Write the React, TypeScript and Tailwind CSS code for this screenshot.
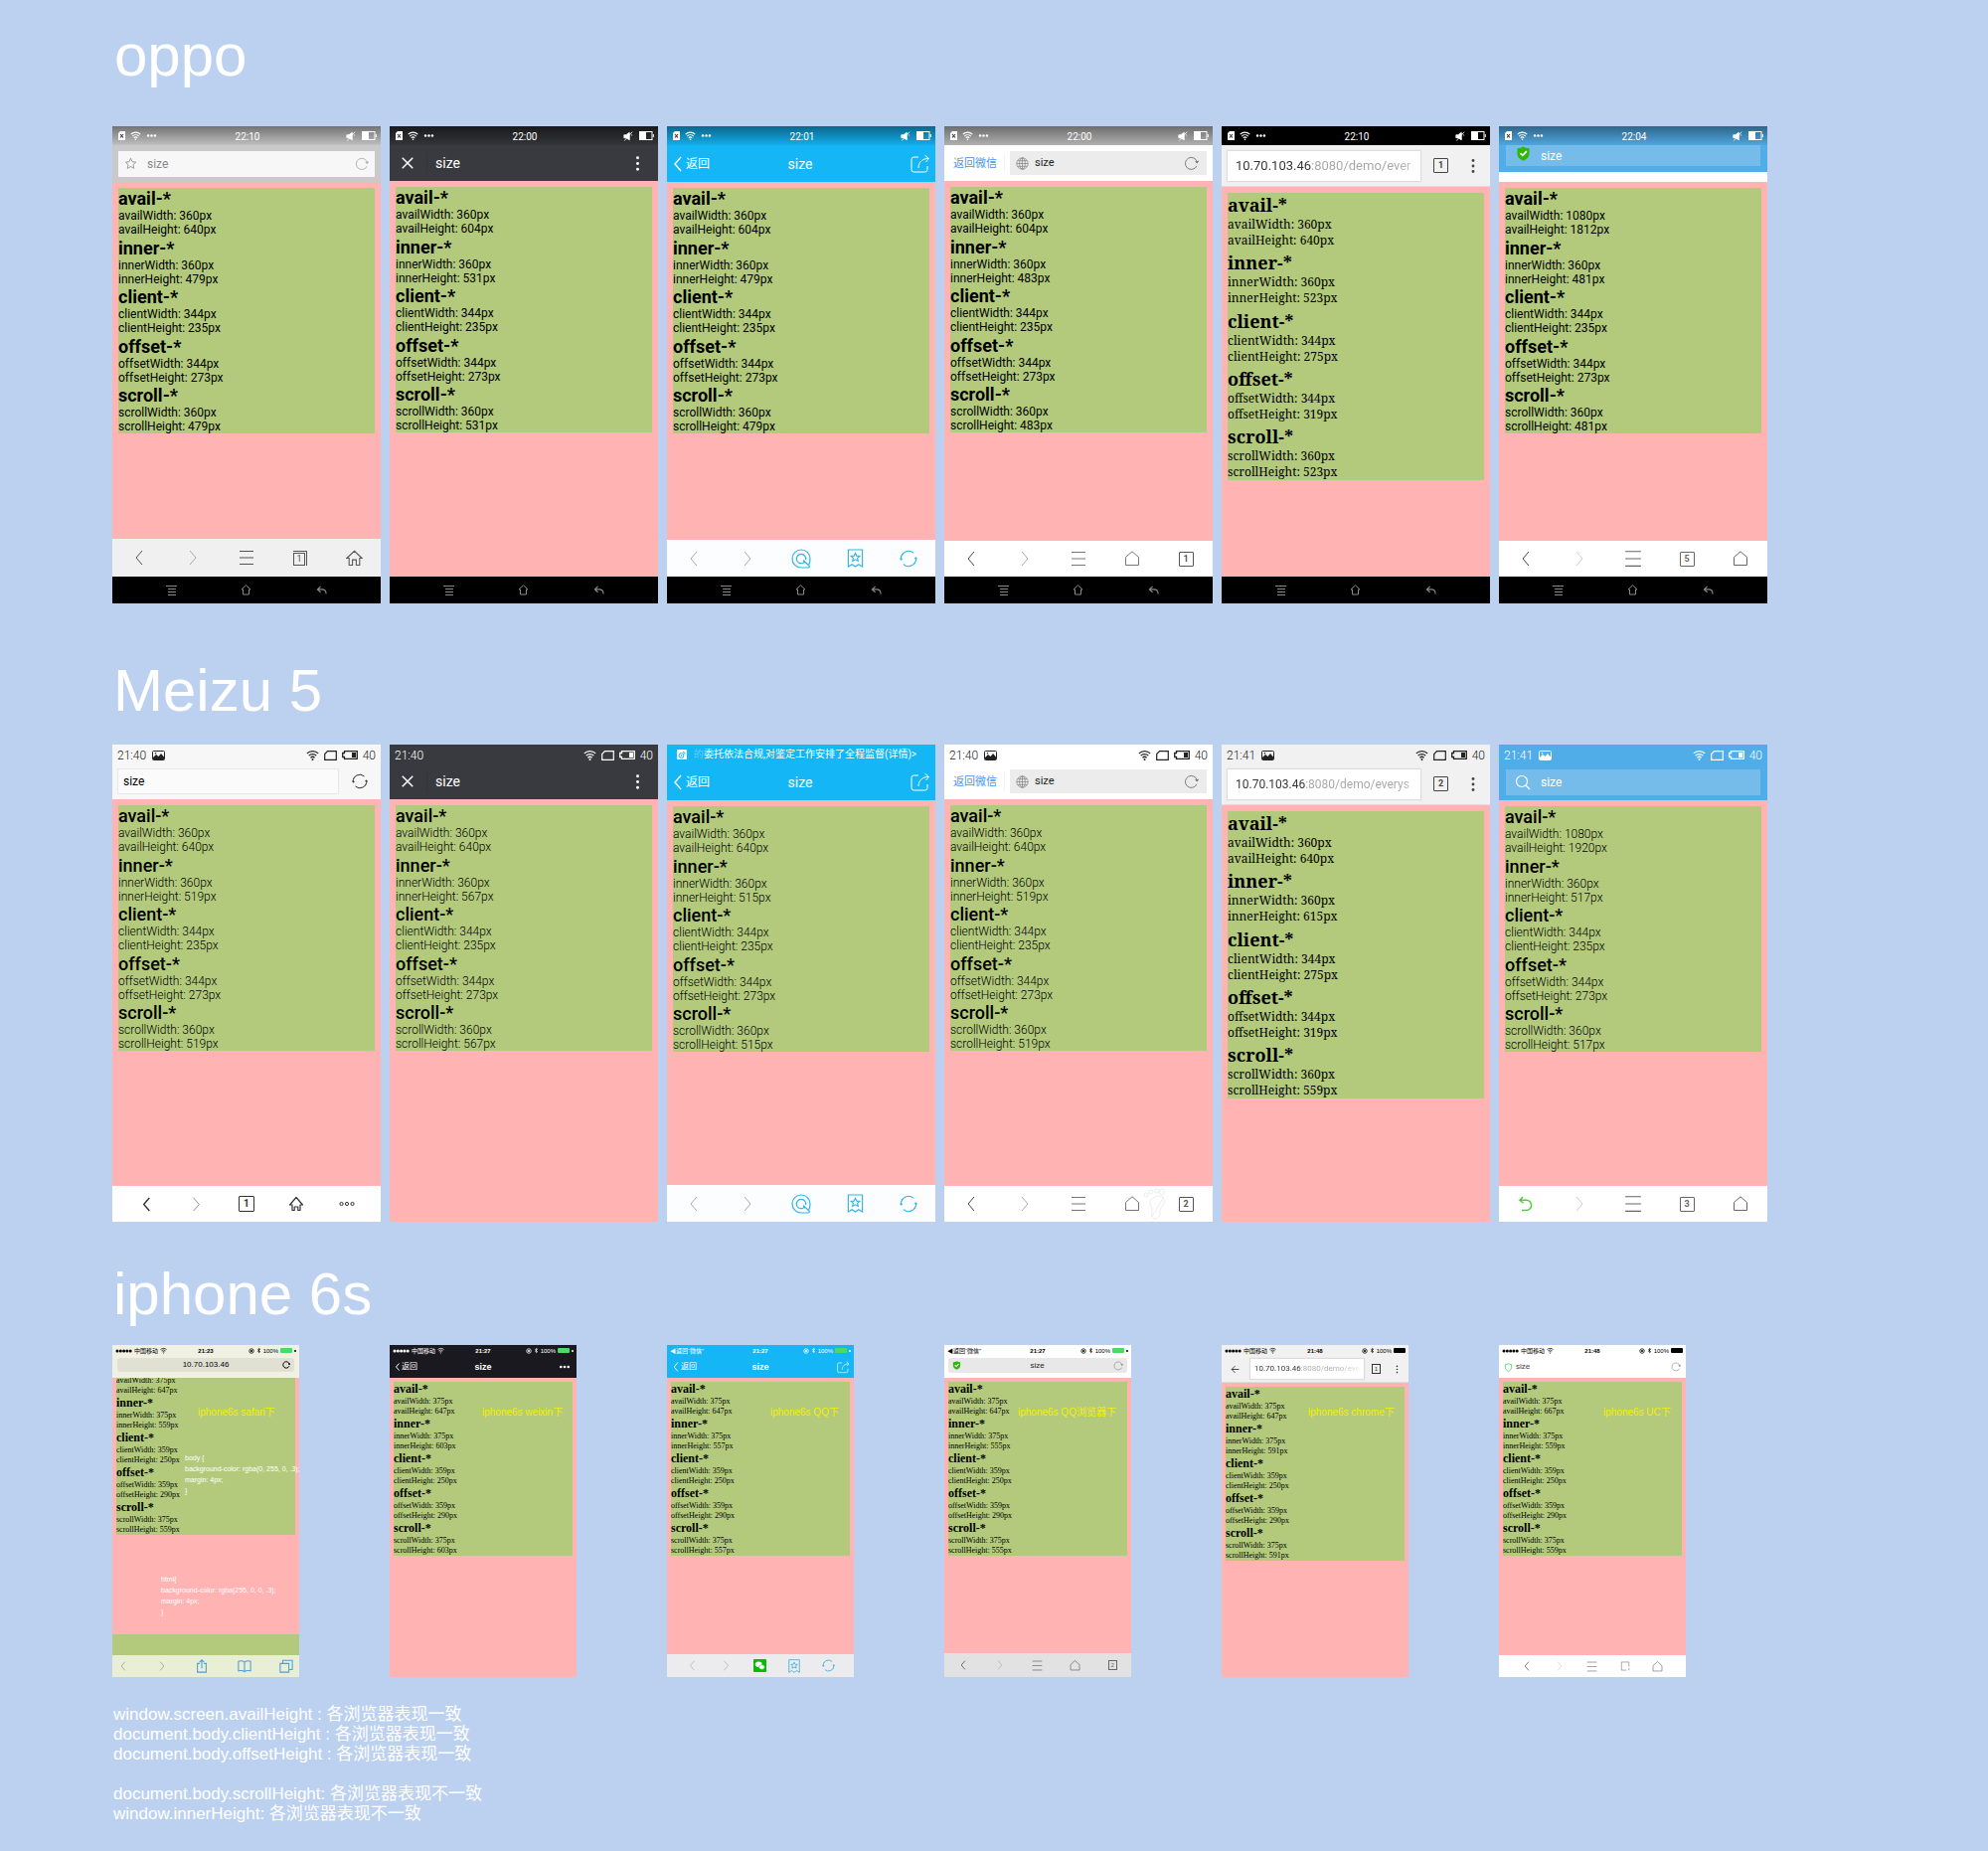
import React from "react";
import type { ReactNode } from "react";

type Kind = "roboto" | "light" | "serif" | "times";

const SANS = "font-['Liberation_Sans','Noto_Sans_CJK_SC',sans-serif]";
const ROBOTO = "font-['Roboto','Noto_Sans_CJK_SC',sans-serif]";

const styles: Record<Kind, { panel: string; title: string; line: string }> = {
  roboto: {
    panel: "h-[247px] font-['Roboto',sans-serif]",
    title: "text-[18px] leading-[21px] font-bold",
    line: "text-[12px] leading-[14px]",
  },
  light: {
    panel: "h-[247px] font-['Roboto',sans-serif]",
    title: "text-[18px] leading-[21px] font-medium",
    line: "text-[12px] leading-[14px] font-light",
  },
  serif: {
    panel: "h-[289px] font-['Noto_Serif','DejaVu_Serif_Condensed','DejaVu_Serif',serif]",
    title: "text-[18px] leading-[24px] font-bold",
    line: "text-[12px] leading-[16px]",
  },
  times: {
    panel: "h-[175px] font-['Liberation_Serif',serif]",
    title: "text-[12px] leading-[15px] font-bold",
    line: "text-[8px] leading-[10px]",
  },
};

/* ---------- icons ---------- */

type IconProps = { className?: string };

function Svg({ className = "size-4", box = 16, w = 1, children }: IconProps & { box?: number; w?: number; children: ReactNode }) {
  return (
    <svg className={className + " shrink-0"} viewBox={`0 0 ${box} ${box}`} fill="none" stroke="currentColor" strokeWidth={w} aria-hidden="true">
      {children}
    </svg>
  );
}

const Left = ({ className }: IconProps) => <Svg className={className}><path d="M11 1 5 8l6 7" /></Svg>;
const Right = ({ className }: IconProps) => <Svg className={className}><path d="m5 1 6 7-6 7" /></Svg>;
const Menu = ({ className }: IconProps) => <Svg className={className}><path d="M1 1.500h14M1 8h14M1 14.500h14" /></Svg>;
const House = ({ className }: IconProps) => <Svg className={className}><path d="M1.500 6.500 8 .8l6.500 5.700v8h-13z" /></Svg>;
const HouseDoor = ({ className }: IconProps) => (
  <Svg className={className}><path d="M.8 8 8 1.200 15.200 8H13v6.500H9.800v-5H6.200v5H3V8z" /></Svg>
);
const ArrowHouse = ({ className }: IconProps) => (
  <Svg className={className} w={1.2}><path d="M1.500 9 8 1.500 14.500 9H12v5.500H9.800V11H6.200v3.500H4V9z" strokeLinejoin="round" /></Svg>
);
const Share = ({ className }: IconProps) => (
  <Svg className={className} box={20}>
    <path d="M8 3H3.500A2.500 2.500 0 0 0 1 5.500v10A2.500 2.500 0 0 0 3.500 18h11a2.500 2.500 0 0 0 2.500-2.500V12" />
    <path d="M8 14c0-6 4-9.500 10-9.500M14.500 1.200 18.500 4.500 15.500 8" />
  </Svg>
);
const Reload = ({ className }: IconProps) => (
  <Svg className={className}><path d="M13.800 10.500A6.400 6.400 0 1 1 14.200 6.500" /><path d="m15.600 5-1.300 2.500-2-1.600" fill="currentColor" /></Svg>
);
const Sync = ({ className }: IconProps) => (
  <Svg className={className}>
    <path d="M1.300 8.500A6.700 6.700 0 0 1 12.500 3M14.700 7.500A6.700 6.700 0 0 1 3.500 13" />
    <path d="M.4 7.800 1.400 9.300 2.700 8.200zM15.600 8.200 14.600 6.700 13.300 7.800z" fill="currentColor" strokeWidth=".5" />
    <path d="M1.800 5.500 3.200 3.500M14.200 10.500l-1.400 2" strokeWidth=".6" />
  </Svg>
);
const Search = ({ className }: IconProps) => <Svg className={className} w={1.2}><circle cx="7" cy="7" r="5.500" /><path d="m11 11 4 4" /></Svg>;
const QSearch = ({ className }: IconProps) => (
  <Svg className={className} box={20} w={1.2}>
    <path d="M17.500 16.500c1.200.8 1 2.500-.5 2.500h-7a9 9 0 1 1 9-9c0 2.600-.6 4.800-1.500 6.500z" />
    <path d="M17 16.200 12.500 12c-.2 1.200.1 2 .8 2.600M12 14.300a4.700 4.700 0 1 1 2.600-3.200" />
  </Svg>
);
const Bookmark = ({ className }: IconProps) => (
  <Svg className={className} box={20} w={1.2}>
    <path d="M2.500 1h15v18l-4-2.500L10 19l-3.500-2.500-4 2.500z" />
    <path d="m10 4.500 1.400 3 3.200.3-2.400 2.100.8 3.200-3-1.700-3 1.700.8-3.200-2.400-2.100 3.200-.3z" />
  </Svg>
);
const Star = ({ className }: IconProps) => (
  <Svg className={className}><path d="m8 1.500 1.900 4.300 4.600.5-3.400 3.100.9 4.600L8 11.700 4 14l.9-4.600L1.500 6.300l4.600-.5z" /></Svg>
);
const Cross = ({ className }: IconProps) => <Svg className={className} w={1.7}><path d="m2 2 12 12M14 2 2 14" /></Svg>;
const Globe = ({ className }: IconProps) => (
  <Svg className={className} w={0.8}><circle cx="8" cy="8" r="7" /><ellipse cx="8" cy="8" rx="3.500" ry="7" /><path d="M8 1v14M1 8h14M2.200 4.500h11.600M2.200 11.500h11.600" /></Svg>
);
const DotsV = ({ className }: IconProps) => (
  <Svg className={className}><g fill="currentColor" stroke="none"><circle cx="8" cy="2.500" r="1.400" /><circle cx="8" cy="8" r="1.400" /><circle cx="8" cy="13.500" r="1.400" /></g></Svg>
);
const DotsH = ({ className }: IconProps) => (
  <Svg className={className}><g fill="currentColor" stroke="none"><circle cx="3" cy="8" r="1.800" /><circle cx="8" cy="8" r="1.800" /><circle cx="13" cy="8" r="1.800" /></g></Svg>
);
const RingsH = ({ className }: IconProps) => (
  <Svg className={className}><circle cx="2.500" cy="8" r="1.600" /><circle cx="8" cy="8" r="1.600" /><circle cx="13.500" cy="8" r="1.600" /></Svg>
);
const Shield = ({ className, outline = false }: IconProps & { outline?: boolean }) => (
  <Svg className={className} w={outline ? 1.5 : 1}>
    {outline ? (
      <path d="M8 1.500 13.500 3v5c0 3.500-2.500 5.500-5.500 7-3-1.500-5.500-3.500-5.500-7V3z" />
    ) : (
      <>
        <path d="M8 .5c2 1.300 4 1.800 6.500 1.800V8c0 4-3 6.200-6.500 7.700C4.500 14.200 1.500 12 1.500 8V2.300C4 2.300 6 1.800 8 .5z" fill="#2fb80c" stroke="none" />
        <path d="m4.800 7.500 2.500 2.500 4.300-4.500" stroke="#fff" strokeWidth="1.800" />
      </>
    )}
  </Svg>
);
const Undo = ({ className }: IconProps) => (
  <Svg className={className} w={1.5}><path d="M5 1 2 4.300l3.500 3M2.500 4.300H8.500a5 5 0 0 1 0 10.200H4" /></Svg>
);
const Wifi = ({ className }: IconProps) => (
  <Svg className={className} w={1.6}><path d="M1 6a10 10 0 0 1 14 0M3.300 8.800a6.700 6.700 0 0 1 9.400 0M5.500 11.300a3.600 3.600 0 0 1 5 0" /><circle cx="8" cy="13.500" r="1.200" fill="currentColor" stroke="none" /></Svg>
);
const SimX = () => (
  <svg className="h-[9px] w-[7px] shrink-0" viewBox="0 0 7 9" aria-hidden="true">
    <path d="M2 0h5v9H0V2z" fill="#fff" />
    <path d="m2 3 3 3.500M5 3 2 6.500" stroke="#333" strokeWidth="1.100" />
  </svg>
);
const Mute = () => (
  <Svg className="size-[10px]" box={12}><path d="M1 4.500h2.500L7.500 1.500v9L3.500 8H1z" fill="currentColor" /><path d="M1.500 11.500 11 .8M9.500 4.500l1.500.5" /></Svg>
);
const Battery = () => (
  <svg className="h-[9px] w-[15px] shrink-0" viewBox="0 0 15 9" fill="none" stroke="currentColor" aria-hidden="true">
    <rect x=".5" y=".5" width="12.500" height="8" /><rect x="1" y="1" width="6" height="7" fill="currentColor" stroke="none" /><path d="M14.300 3v3" />
  </svg>
);
const Picture = () => (
  <svg className="h-[10px] w-[13px] shrink-0" viewBox="0 0 13 10" fill="none" stroke="currentColor" aria-hidden="true">
    <rect x=".5" y=".5" width="12" height="9" rx="1" /><path d="M1 9V7l3-3 2.500 2 2.500-3 3 3.500V9z" fill="currentColor" stroke="none" /><circle cx="3.500" cy="2.800" r=".8" fill="currentColor" stroke="none" />
  </svg>
);
const SimOutline = () => (
  <svg className="h-[10px] w-[13px] shrink-0" viewBox="0 0 13 10" fill="none" stroke="currentColor" aria-hidden="true">
    <path d="M3.500.7h8.800v8.600H.7V3.500z" strokeWidth="1.200" />
  </svg>
);
const MzBattery = () => (
  <svg className="h-[9px] w-4 shrink-0" viewBox="0 0 16 9" fill="none" stroke="currentColor" aria-hidden="true">
    <path d="M2.500.7h12.800v7.600H2.500V6.500H.7v-4h1.800z" strokeWidth="1.300" /><path d="M10 2h4v5h-4z" fill="currentColor" stroke="none" />
  </svg>
);
const Weibo = () => (
  <svg className="size-[10px] shrink-0" viewBox="0 0 10 10" aria-hidden="true">
    <rect width="10" height="10" rx="1" fill="#fff" /><circle cx="4.500" cy="6" r="2.400" fill="none" stroke="#14b6f6" /><circle cx="4.500" cy="6" r=".8" fill="#14b6f6" /><path d="M6 2.500a2 2 0 0 1 2 2.200" stroke="#14b6f6" fill="none" />
  </svg>
);
const WeChat = () => (
  <svg className="size-[13px] shrink-0" viewBox="0 0 13 13" aria-hidden="true">
    <rect width="13" height="13" rx="1" fill="#09bb07" /><ellipse cx="5.200" cy="5.200" rx="3.400" ry="2.800" fill="#fff" /><ellipse cx="8.400" cy="8" rx="2.900" ry="2.300" fill="#fff" stroke="#09bb07" strokeWidth=".5" />
  </svg>
);
const Recents = () => (
  <svg className="h-[10px] w-[11px] shrink-0" viewBox="0 0 11 10" stroke="currentColor" aria-hidden="true">
    <path d="M0 .5h11M2 3.500h8M2 6.500h8M2 9.500h8" />
  </svg>
);
const ShareUp = ({ className }: IconProps) => <Svg className={className} w={1.2}><path d="M5.500 5H3v10h10V5h-2.500M8 10.500V1M5.300 3.500 8 .9l2.700 2.600" /></Svg>;
const Book = ({ className }: IconProps) => <Svg className={className} w={1.2}><path d="M8 3.500C6 1.800 3.500 1.800 1 2.500v11c2.500-.7 5-.7 7 1 2-1.700 4.500-1.700 7-1v-11c-2.500-.7-5-.7-7 1zm0 0v11" /></Svg>;
const Tabs = ({ className }: IconProps) => <Svg className={className} w={1.2}><path d="M1 5h10v10H1zM4 5V1.500h11V12h-4" /></Svg>;
const Corner = ({ className }: IconProps) => <Svg className={className}><path d="M10 14.500H2v-13h12V9M14 11v4" /></Svg>;
const Back = ({ className }: IconProps) => <Svg className={className} w={1.6}><path d="M15 8H2M8 2 2 8l6 6" /></Svg>;
const Foot = () => (
  <svg className="pointer-events-none absolute top-[2px] right-[46px] h-8 w-6" viewBox="0 0 24 32" fill="none" stroke="#ececec" aria-hidden="true">
    <circle cx="3" cy="7" r="2" /><circle cx="8" cy="4" r="2" /><circle cx="13.500" cy="3" r="2" /><ellipse cx="19" cy="4" rx="2.500" ry="3" />
    <path d="M8 12c4-5 12-5 13 0 1 5-4 7-4 12s-2 7-5 7-4-4-3-8-4-7-1-11zM21 8 9 29" />
  </svg>
);

function Count({ n, small = false }: { n: number; small?: boolean }) {
  return (
    <span className={small
      ? "flex h-[10px] w-[9px] items-center justify-center border border-current text-[6px] leading-none"
      : "flex size-[15px] items-center justify-center rounded-[1px] border border-current text-[9px] leading-none font-bold"}>
      {n}
    </span>
  );
}

const Stack = () => (
  <span className="flex border-t border-r border-current pt-px pr-px">
    <span className="flex h-[13px] w-3 items-center justify-center border border-current text-[9px] leading-none">1</span>
  </span>
);

/* ---------- building blocks ---------- */

function Btn({ label, className = "", children }: { label: string; className?: string; children: ReactNode }) {
  return <button type="button" aria-label={label} className={"flex shrink-0 items-center justify-center " + className}>{children}</button>;
}

function Input({ value, className = "" }: { value: string; className?: string }) {
  return <input type="text" aria-label="Address" defaultValue={value} className={"min-w-0 flex-1 bg-transparent p-0 outline-none " + className} />;
}

function Metrics({ kind, w, h, skipFirst = false }: { kind: Kind; w: string[]; h: string[]; skipFirst?: boolean }) {
  const s = styles[kind];
  return (
    <div className={"flex shrink-0 flex-col justify-between bg-[#b3ca7d] text-black " + (skipFirst ? "-mt-[21px] " : "") + s.panel}>
      {["avail", "inner", "client", "offset", "scroll"].map((name, i) => (
        <section key={name}>
          <h3 className={s.title}>{name}-*</h3>
          <p className={s.line}>{name}Width: {w[i]}px</p>
          <p className={s.line}>{name}Height: {h[i]}px</p>
        </section>
      ))}
    </div>
  );
}

function OppoStatus({ time, className }: { time: string; className: string }) {
  return (
    <div className={"grid h-[19px] shrink-0 grid-cols-[1fr_auto_1fr] items-center pr-1 pl-[6px] text-white " + className}>
      <span className="flex items-center gap-[5px]"><SimX /><Wifi className="size-[11px]" /><DotsH className="size-[11px]" /></span>
      <span className="pt-[2px] text-[10px] leading-none">{time}</span>
      <span className="flex items-center justify-end gap-[6px]"><Mute /><Battery /></span>
    </div>
  );
}

function MeizuStatus({ time, picture = true, className }: { time: string; picture?: boolean; className: string }) {
  return (
    <div className={"flex h-[19px] shrink-0 items-center gap-[6px] px-[5px] pt-[2px] text-[12px] leading-none font-light " + className}>
      <span>{time}</span>
      {picture && <Picture />}
      <span className="ml-auto flex items-center gap-[5px]"><Wifi className="size-[13px]" /><SimOutline /><MzBattery /><span>40</span></span>
    </div>
  );
}

function OppoNav() {
  return (
    <nav aria-label="System" className="grid h-[27px] shrink-0 grid-cols-3 items-center bg-black px-[22px] text-[#8a8a8a]">
      <Btn label="Menu"><Recents /></Btn>
      <Btn label="Home"><Svg className="size-[11px]" box={11}><path d="M1 5 5.500.8 10 5H8.500v5h-6V5z" /></Svg></Btn>
      <Btn label="Back"><Svg className="size-[11px]" box={12} w={1.2}><path d="M5 2 1.500 5.500 5 8.500M1.500 5.300h5c3 0 4.500 2 4.500 5" /></Svg></Btn>
    </nav>
  );
}

function Toolbar({ className, items }: { className: string; items: [string, ReactNode, string?][] }) {
  return (
    <nav aria-label="Browser" className={"relative grid shrink-0 grid-cols-5 items-center " + className}>
      {items.map(([label, icon, cls]) => <Btn key={label} label={label} className={cls ?? ""}>{icon}</Btn>)}
    </nav>
  );
}

const QQTools = () => (
  <Toolbar className="h-[37px] bg-[#fcfdff] text-[#2eb5ea]" items={[
    ["Back", <Left className="size-4" />, "text-[#aaa]"],
    ["Forward", <Right className="size-4" />, "text-[#aaa]"],
    ["Search", <QSearch className="size-5" />],
    ["Bookmark", <Bookmark className="size-[19px]" />],
    ["Reload", <Sync className="size-[18px]" />],
  ]} />
);

function LightTools({ n, foot = false }: { n: number; foot?: boolean }) {
  return (
    <nav aria-label="Browser" className="relative grid h-9 shrink-0 grid-cols-5 items-center bg-white text-[#777]">
      {foot && <Foot />}
      <Btn label="Back" className="text-[#444]"><Left className="size-4" /></Btn>
      <Btn label="Forward" className="text-[#aaa]"><Right className="size-4" /></Btn>
      <Btn label="Menu"><Menu className="size-4" /></Btn>
      <Btn label="Home"><House className="size-4" /></Btn>
      <Btn label="Windows" className="text-[#555]"><Count n={n} /></Btn>
    </nav>
  );
}

const UCTools = ({ n, undo = false }: { n: number; undo?: boolean }) => (
  <Toolbar className="h-9 bg-white text-[#666]" items={[
    ["Back", undo ? <Undo className="size-4" /> : <Left className="size-4" />, undo ? "text-[#52cc3a]" : "text-[#444]"],
    ["Forward", <Right className="size-4" />, "text-[#ccc]"],
    ["Menu", <Menu className="size-[18px]" />],
    ["Windows", <Count n={n} />],
    ["Home", <House className="size-4" />],
  ]} />
);

const WeixinHeader = () => (
  <header className="flex h-9 shrink-0 items-center bg-[#393a3f] text-white">
    <Btn label="Close" className="ml-[11px]"><Cross className="size-[14px]" /></Btn>
    <span className="ml-3 h-5 w-px bg-[#34353a]" />
    <span className="ml-2 flex-1 text-[14px] leading-none">size</span>
    <Btn label="More" className="mr-3"><DotsV className="size-[17px]" /></Btn>
  </header>
);

const QQHeader = () => (
  <header className="grid h-[37px] shrink-0 grid-cols-[1fr_auto_1fr] items-center bg-[#14b6f6] pr-[5px] pl-[3px] text-white">
    <a href="#back" className="flex items-center text-[12px] leading-none"><Left className="h-[18px] w-4 stroke-[1.4]" />返回</a>
    <span className="text-[14px] leading-none">size</span>
    <Btn label="Share" className="justify-self-end"><Share className="size-5" /></Btn>
  </header>
);

const QQBrowserHeader = () => (
  <header className="flex h-9 shrink-0 items-center bg-white pr-[6px] pl-[9px]">
    <a href="#weixin" className="text-[11px] leading-none text-[#4a94ea]">返回微信</a>
    <span className="mr-[5px] ml-[7px] h-5 w-px bg-[#f3f3f3]" />
    <div className="flex h-6 min-w-0 flex-1 items-center gap-[6px] bg-[#ececec] pr-2 pl-[6px]">
      <Globe className="size-[13px] text-[#777]" />
      <Input value="size" className="text-[11px] text-[#222]" />
      <Btn label="Reload" className="text-[#777]"><Reload className="size-[15px]" /></Btn>
    </div>
  </header>
);

const ChromeHeader = ({ n, meizu = false }: { n: number; meizu?: boolean }) => (
  <header className="flex h-[42px] shrink-0 items-center border-b border-[#ddd] bg-[#f1f1f1] pl-[6px] text-[#444]">
    <div className="flex h-[30px] min-w-0 flex-1 items-center bg-white px-[8px] shadow-[0_0_1px_1px_#ddd]">
      {meizu ? (
        <Input value="10.70.103.46:8080/demo/everys" className="bg-[linear-gradient(90deg,#333_70px,#a5a5a5_70px,#a5a5a5_92%,#ccc)]! bg-clip-text! text-[12px] text-transparent" />
      ) : (
        <Input value="10.70.103.46:8080/demo/ever" className="bg-[linear-gradient(90deg,#333_76px,#a5a5a5_76px,#a5a5a5_92%,#ccc)]! bg-clip-text! text-[13px] text-transparent" />
      )}
    </div>
    <Btn label="Tabs" className="ml-[13px]"><Count n={n} /></Btn>
    <Btn label="More" className="mr-[9px] ml-[17px]"><DotsV className="size-4" /></Btn>
  </header>
);

function Phone({ children }: { children: ReactNode }) {
  return <article className={"flex aspect-[9/16] flex-col overflow-hidden " + ROBOTO}>{children}</article>;
}

function Body({ children }: { children: ReactNode }) {
  return <div className="flex min-h-0 flex-1 flex-col bg-[#ffb3b3] p-[6px]">{children}</div>;
}

/* ---------- iPhone blocks ---------- */

function Iphone({ children }: { children: ReactNode }) {
  return <article className={"relative flex aspect-[375/667] w-[188px] flex-col " + SANS}>{children}</article>;
}

function IosStatus({ time, from = false, black = false, className = "" }: { time: string; from?: boolean; black?: boolean; className?: string }) {
  return (
    <div className={"grid h-[11px] shrink-0 grid-cols-[1fr_auto_1fr] items-center px-[3px] text-[6px] leading-none " + className}>
      {from ? (
        <span className="whitespace-nowrap">◀返回“微信”</span>
      ) : (
        <span className="flex items-center gap-[2px] whitespace-nowrap">
          <svg className="h-1 w-[17px]" viewBox="0 0 17 4" fill="currentColor" aria-hidden="true">
            <circle cx="2" cy="2" r="1.500" /><circle cx="5.300" cy="2" r="1.500" /><circle cx="8.600" cy="2" r="1.500" /><circle cx="11.900" cy="2" r="1.500" /><circle cx="15.200" cy="2" r="1.500" />
          </svg>
          中国移动<Wifi className="size-[7px]" />
        </span>
      )}
      <span className="text-[6px] font-bold">{time}</span>
      <span className="flex items-center justify-end gap-[2px]">
        <Svg className="size-[6px]" w={2}><circle cx="8" cy="8" r="6" /><circle cx="8" cy="8" r="2" fill="currentColor" /></Svg>
        <Svg className="h-[7px] w-[5px]" w={2}><path d="m3 4 9 8-4 3V1l4 3-9 8" /></Svg>
        100%
        <span className={"h-[5px] w-3 rounded-[1px] " + (black ? "bg-black" : "bg-[#4cd964]")} />
        {!black && <span className="size-[2px] rounded-full bg-current" />}
      </span>
    </div>
  );
}

const IosBody = ({ children }: { children: ReactNode }) => (
  <div className="flex min-h-0 flex-1 flex-col overflow-hidden bg-[#ffb3b3] px-1 pt-1">{children}</div>
);

const Tag = ({ className, children }: { className: string; children: ReactNode }) => (
  <p className={"absolute top-[62px] text-[10px] leading-3 whitespace-nowrap text-[#f5ee00] " + className}>{children}</p>
);

const W360 = ["360", "360", "344", "344", "360"];
const W375 = ["375", "375", "359", "359", "375"];
const TALL = (a: string, b: string) => [a, b, "235", "273", b];
const ios = (b: string, a = "647") => [a, b, "250", "290", b];

export default function App() {
  return (
    <main className={"min-h-screen bg-[#bcd1f0] pt-[26px] pr-[222px] pb-[38px] pl-[113px] " + SANS}>
      <h1 className="ml-[2px] text-[60px] leading-[60px] text-white">oppo</h1>
      <div className="mt-[41px] grid grid-cols-6 gap-[9px]">
        <Phone>
          <OppoStatus time="22:10" className="bg-linear-to-b from-[#747474] to-[#bfbfbf]" />
          <header className="flex h-[37px] shrink-0 items-center bg-[#c9c9c9] px-[6px]">
            <div className="flex h-[26px] min-w-0 flex-1 items-center bg-[#f7f7f7] px-[6px] text-[#888]">
              <Star className="size-[13px]" />
              <Input value="size" className="ml-[10px] text-[12px]" />
              <Btn label="Reload" className="text-[#aaa]"><Reload className="size-[14px]" /></Btn>
            </div>
          </header>
          <Body><Metrics kind="roboto" w={W360} h={TALL("640", "479")} /></Body>
          <Toolbar className="h-[38px] bg-[#f0f0f0] text-[#555]" items={[
            ["Back", <Left className="size-4" />],
            ["Forward", <Right className="size-4" />, "text-[#aaa]"],
            ["Menu", <Menu className="size-4" />],
            ["Windows", <Stack />],
            ["Home", <HouseDoor className="size-[17px]" />],
          ]} />
          <OppoNav />
        </Phone>
        <Phone>
          <OppoStatus time="22:00" className="bg-linear-to-b from-[#1a1a1c] to-[#34353a]" />
          <WeixinHeader />
          <Body><Metrics kind="roboto" w={W360} h={TALL("604", "531")} /></Body>
          <OppoNav />
        </Phone>
        <Phone>
          <OppoStatus time="22:01" className="bg-linear-to-b from-[#0b678b] to-[#13aeeb]" />
          <QQHeader />
          <Body><Metrics kind="roboto" w={W360} h={TALL("604", "479")} /></Body>
          <QQTools />
          <OppoNav />
        </Phone>
        <Phone>
          <OppoStatus time="22:00" className="bg-linear-to-b from-[#6e6e6e] to-[#b0b0b0]" />
          <QQBrowserHeader />
          <Body><Metrics kind="roboto" w={W360} h={TALL("604", "483")} /></Body>
          <LightTools n={1} />
          <OppoNav />
        </Phone>
        <Phone>
          <OppoStatus time="22:10" className="bg-black" />
          <ChromeHeader n={1} />
          <Body><Metrics kind="serif" w={W360} h={["640", "523", "275", "319", "523"]} /></Body>
          <OppoNav />
        </Phone>
        <Phone>
          <OppoStatus time="22:04" className="bg-linear-to-b from-[#2f668a] to-[#4ea7df]" />
          <header className="shrink-0 border-b-[10px] border-white bg-[#50ade8] px-[7px] pb-[6px]">
            <div className="flex h-[21px] items-center bg-[#76bcea] px-[10px]">
              <Shield className="mb-1 size-[15px]" />
              <Input value="size" className="ml-[10px] text-[12px] text-white" />
            </div>
          </header>
          <Body><Metrics kind="roboto" w={["1080", "360", "344", "344", "360"]} h={TALL("1812", "481")} /></Body>
          <UCTools n={5} />
          <OppoNav />
        </Phone>
      </div>

      <h2 className="mt-[58px] ml-px text-[60px] leading-[60px] text-white">Meizu 5</h2>
      <div className="mt-6 grid grid-cols-6 gap-[9px]">
        <Phone>
          <MeizuStatus time="21:40" className="bg-[#f7f7f7] text-[#222]" />
          <header className="flex h-9 shrink-0 items-center bg-[#f7f7f7] pl-[5px]">
            <div className="flex h-[26px] min-w-0 flex-1 items-center border border-[#e8e8e8] bg-[#fbfbfb] pl-[5px]">
              <Input value="size" className="text-[12px] text-black" />
            </div>
            <Btn label="Reload" className="mr-[13px] ml-[13px] text-[#333]"><Sync className="size-4" /></Btn>
          </header>
          <Body><Metrics kind="light" w={W360} h={TALL("640", "519")} /></Body>
          <Toolbar className="h-9 bg-white px-[9px] text-[#333]" items={[
            ["Back", <Left className="size-[15px] stroke-[1.5]" />],
            ["Forward", <Right className="size-[15px]" />, "text-[#888]"],
            ["Windows", <span className="flex size-4 items-center justify-center rounded-[1px] border border-[#333] text-[10px] leading-none font-bold">1</span>],
            ["Home", <ArrowHouse className="size-4" />],
            ["More", <RingsH className="size-4" />],
          ]} />
        </Phone>
        <Phone>
          <MeizuStatus time="21:40" picture={false} className="bg-[#393a3f] text-white" />
          <WeixinHeader />
          <Body><Metrics kind="light" w={W360} h={TALL("640", "567")} /></Body>
        </Phone>
        <Phone>
          <div className="flex h-[19px] shrink-0 items-center gap-[7px] bg-[#14b6f6] pl-[10px] text-white">
            <Weibo />
            <p className="text-[10px] leading-4 whitespace-nowrap"><span className="opacity-30">的</span>委托依法合规,对鉴定工作安排了全程监督(详情)&gt;</p>
          </div>
          <QQHeader />
          <Body><Metrics kind="light" w={W360} h={TALL("640", "515")} /></Body>
          <QQTools />
        </Phone>
        <Phone>
          <MeizuStatus time="21:40" className="bg-white text-[#222]" />
          <QQBrowserHeader />
          <Body><Metrics kind="light" w={W360} h={TALL("640", "519")} /></Body>
          <LightTools n={2} foot />
        </Phone>
        <Phone>
          <MeizuStatus time="21:41" className="bg-[#f1f1f1] text-[#222]" />
          <ChromeHeader n={2} meizu />
          <Body><Metrics kind="serif" w={W360} h={["640", "615", "275", "319", "559"]} /></Body>
        </Phone>
        <Phone>
          <MeizuStatus time="21:41" className="bg-[#50ade8] text-white" />
          <header className="flex h-[37px] shrink-0 items-center bg-[#50ade8] px-[7px]">
            <div className="flex h-[26px] min-w-0 flex-1 items-center bg-[#76bcea] px-[9px] text-white">
              <Search className="size-4" />
              <Input value="size" className="ml-[10px] text-[12px]" />
            </div>
          </header>
          <Body><Metrics kind="light" w={["1080", "360", "344", "344", "360"]} h={TALL("1920", "517")} /></Body>
          <UCTools n={3} undo />
        </Phone>
      </div>

      <h2 className="mt-[43px] ml-px text-[60px] leading-[60px] text-white">iphone 6s</h2>
      <div className="mt-[21px] grid grid-cols-6 gap-[9px]">
        <Iphone>
          <IosStatus time="21:23" className="bg-[#f1f1e3] text-black" />
          <header className="shrink-0 bg-[#f1f1e3] px-[5px] pt-[2px] pb-[6px] text-black">
            <div className="flex h-[14px] items-center rounded-[3px] bg-[#e0e1d2] pr-1 pl-3">
              <Input value="10.70.103.46" className="text-center text-[8px]" />
              <Btn label="Reload"><Reload className="size-2 stroke-2" /></Btn>
            </div>
          </header>
          <IosBody><Metrics kind="times" w={W375} h={ios("559")} skipFirst /></IosBody>
          <div className="h-[21px] shrink-0 bg-[#b3ca7d]" />
          <nav aria-label="Browser" className="flex h-[22px] shrink-0 items-center justify-between bg-[#e8efd5] px-[6px] text-[#4b9fd8]">
            <Btn label="Back" className="text-[#a5ab95]"><Left className="size-[10px] stroke-[1.5]" /></Btn>
            <Btn label="Forward" className="text-[#a5ab95]"><Right className="size-[10px] stroke-[1.5]" /></Btn>
            <Btn label="Share"><ShareUp className="size-[14px]" /></Btn>
            <Btn label="Bookmarks"><Book className="size-[14px]" /></Btn>
            <Btn label="Tabs"><Tabs className="size-[14px]" /></Btn>
          </nav>
          <Tag className="left-[86px]">iphone6s safari下</Tag>
          <p className="absolute top-[108px] left-[73px] text-[7px] leading-[11px] whitespace-pre text-white">{"body {\nbackground-color: rgba(0, 255, 0, .3);\nmargin: 4px;\n}"}</p>
          <p className="absolute top-[230px] left-[49px] text-[7px] leading-[11px] whitespace-pre text-white">{"html{\nbackground-color: rgba(255, 0, 0, .3);\nmargin: 4px;\n}"}</p>
        </Iphone>
        <Iphone>
          <IosStatus time="21:27" className="bg-[#1a1920] text-white" />
          <header className="grid h-[22px] shrink-0 grid-cols-[1fr_auto_1fr] items-center bg-[#1a1920] px-[4px] text-[8px] leading-none text-white">
            <a href="#back" className="flex items-center"><Left className="size-2 stroke-2" />返回</a>
            <span className="text-[9px] font-bold">size</span>
            <Btn label="More" className="mr-[2px] justify-self-end"><DotsH className="size-3" /></Btn>
          </header>
          <IosBody><Metrics kind="times" w={W375} h={ios("603")} /></IosBody>
          <Tag className="left-[93px]">iphone6s weixin下</Tag>
        </Iphone>
        <Iphone>
          <IosStatus time="21:27" from className="bg-[#14b6f6] text-white" />
          <header className="grid h-[22px] shrink-0 grid-cols-[1fr_auto_1fr] items-center bg-[#14b6f6] px-[4px] text-[8px] leading-none text-white">
            <a href="#back" className="flex items-center"><Left className="size-[10px] stroke-[1.5]" />返回</a>
            <span className="text-[9px] font-bold">size</span>
            <Btn label="Share" className="justify-self-end"><Share className="size-[13px]" /></Btn>
          </header>
          <IosBody><Metrics kind="times" w={W375} h={ios("557")} /></IosBody>
          <Toolbar className="h-[23px] bg-[#ececee] px-2 text-[#3badde]" items={[
            ["Back", <Left className="size-[11px]" />, "text-[#aaa]"],
            ["Forward", <Right className="size-[11px]" />, "text-[#aaa]"],
            ["WeChat", <WeChat />],
            ["Bookmark", <Bookmark className="size-[14px]" />],
            ["Reload", <Sync className="size-[13px]" />],
          ]} />
          <Tag className="left-[104px]">iphone6s QQ下</Tag>
        </Iphone>
        <Iphone>
          <IosStatus time="21:27" from className="bg-white text-black" />
          <header className="shrink-0 bg-white px-1 pt-[2px] pb-[5px]">
            <div className="flex h-[15px] items-center rounded-[2px] bg-[#e8e8e8] px-1 text-[#222]">
              <Shield className="size-[9px]" />
              <Input value="size" className="text-center text-[8px]" />
              <Btn label="Reload" className="text-[#888]"><Reload className="size-[10px]" /></Btn>
            </div>
          </header>
          <IosBody><Metrics kind="times" w={W375} h={ios("555")} /></IosBody>
          <Toolbar className="h-6 bg-[#e2e2e2] text-[#666]" items={[
            ["Back", <Left className="size-[10px] stroke-[1.5]" />],
            ["Forward", <Right className="size-[10px]" />, "text-[#aaa]"],
            ["Menu", <Menu className="size-[11px]" />],
            ["Home", <House className="size-[11px]" />],
            ["Windows", <Count n={2} small />],
          ]} />
          <Tag className="left-[74px]">iphone6s QQ浏览器下</Tag>
        </Iphone>
        <Iphone>
          <IosStatus time="21:48" black className="bg-[#f1f1f1] text-black" />
          <header className="flex h-[27px] shrink-0 items-center border-b border-[#ddd] bg-[#f1f1f1] text-[#333]">
            <Btn label="Back" className="ml-[9px]"><Back className="size-[9px]" /></Btn>
            <div className="ml-[11px] flex h-5 min-w-0 flex-1 items-center bg-white px-1 shadow-[0_0_1px_1px_#ddd]">
              <Input value="10.70.103.46:8080/demo/eve" className="bg-[linear-gradient(90deg,#333_47px,#aaa_47px,#aaa_80%,#eee)]! bg-clip-text! font-['Roboto',sans-serif] text-[8px] text-transparent" />
            </div>
            <Btn label="Tabs" className="ml-2"><Count n={1} small /></Btn>
            <Btn label="More" className="mr-[7px] ml-3"><DotsV className="size-[9px]" /></Btn>
          </header>
          <IosBody><Metrics kind="times" w={W375} h={ios("591")} /></IosBody>
          <Tag className="left-[87px]">iphone6s chrome下</Tag>
        </Iphone>
        <Iphone>
          <IosStatus time="21:48" black className="bg-white text-black" />
          <header className="flex h-[22px] shrink-0 items-center gap-[3px] bg-white px-[5px]">
            <Shield outline className="size-[9px] text-[#4ad06a]" />
            <Input value="size" className="text-[8px] text-[#444]" />
            <Btn label="Reload" className="text-[#888]"><Reload className="size-[10px]" /></Btn>
          </header>
          <IosBody><Metrics kind="times" w={W375} h={ios("559", "667")} /></IosBody>
          <Toolbar className="h-[22px] bg-white px-3 text-[#777]" items={[
            ["Back", <Left className="size-[10px] stroke-[1.5]" />],
            ["Forward", <Right className="size-[10px]" />, "text-[#ccc]"],
            ["Menu", <Menu className="size-[11px]" />],
            ["Windows", <Corner className="size-[10px]" />],
            ["Home", <House className="size-[11px]" />],
          ]} />
          <Tag className="left-[105px]">iphone6s UC下</Tag>
        </Iphone>
      </div>

      <div className="mt-7 ml-px text-[17px] leading-5 text-white">
        <p>window.screen.availHeight : 各浏览器表现一致</p>
        <p>document.body.clientHeight : 各浏览器表现一致</p>
        <p>document.body.offsetHeight : 各浏览器表现一致</p>
        <p className="mt-5">document.body.scrollHeight: 各浏览器表现不一致</p>
        <p>window.innerHeight: 各浏览器表现不一致</p>
      </div>
    </main>
  );
}
